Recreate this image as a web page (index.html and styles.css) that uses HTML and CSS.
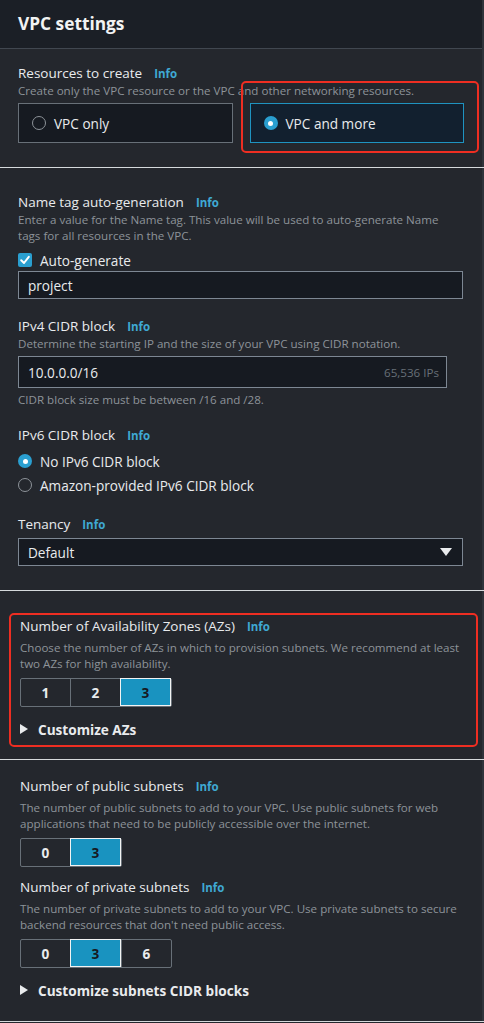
FILE: index.html
```html
<!DOCTYPE html>
<html lang="en">
<head>
<meta charset="utf-8">
<title>VPC settings</title>
<link rel="stylesheet" href="styles.css">
</head>
<body>
<div class="panel">
  <div class="panel-head"><h2 class="title">VPC settings</h2></div>

  <section class="sec sec-res">
    <div class="label-row"><span class="label">Resources to create</span><span class="info">Info</span></div>
    <p class="desc">Create only the VPC resource or the VPC and other networking resources.</p>
    <div class="tiles">
      <div class="tile"><span class="radio"></span><span>VPC only</span></div>
      <div class="tile tile-on"><span class="radio radio-on"></span><span>VPC and more</span></div>
    </div>
    <div class="highlight hl-res"></div>
  </section>

  <section class="sec sec-main">
    <div class="field">
      <div class="label-row"><span class="label">Name tag auto-generation</span><span class="info">Info</span></div>
      <p class="desc">Enter a value for the Name tag. This value will be used to auto-generate Name tags for all resources in the VPC.</p>
      <div class="check-row">
        <span class="checkbox"><svg viewBox="0 0 14 14" width="14" height="14"><path d="M3.2 7.2 L6 10 L10.8 3.8" fill="none" stroke="#fff" stroke-width="2" stroke-linecap="round" stroke-linejoin="round"/></svg></span>
        <span>Auto-generate</span>
      </div>
      <div class="input input-name">project</div>
    </div>

    <div class="field">
      <div class="label-row"><span class="label">IPv4 CIDR block</span><span class="info">Info</span></div>
      <p class="desc">Determine the starting IP and the size of your VPC using CIDR notation.</p>
      <div class="input input-cidr"><span>10.0.0.0/16</span><span class="suffix">65,536 IPs</span></div>
      <p class="desc helper">CIDR block size must be between /16 and /28.</p>
    </div>

    <div class="field">
      <div class="label-row"><span class="label">IPv6 CIDR block</span><span class="info">Info</span></div>
      <div class="radio-list">
        <div class="radio-row"><span class="radio radio-on"></span><span>No IPv6 CIDR block</span></div>
        <div class="radio-row"><span class="radio"></span><span>Amazon-provided IPv6 CIDR block</span></div>
      </div>
    </div>

    <div class="field">
      <div class="label-row"><span class="label">Tenancy</span><span class="info">Info</span></div>
      <div class="input select"><span>Default</span><span class="caret"></span></div>
    </div>
  </section>

  <section class="sec sec-az">
    <div class="label-row"><span class="label">Number of Availability Zones (AZs)</span><span class="info">Info</span></div>
    <p class="desc">Choose the number of AZs in which to provision subnets. We recommend at least two AZs for high availability.</p>
    <div class="seg">
      <span class="seg-btn">1</span><span class="seg-btn">2</span><span class="seg-btn seg-on">3</span>
    </div>
    <div class="expander"><span class="tri"></span><span>Customize AZs</span></div>
    <div class="highlight hl-az"></div>
  </section>

  <section class="sec sec-subnets">
    <div class="label-row"><span class="label">Number of public subnets</span><span class="info">Info</span></div>
    <p class="desc">The number of public subnets to add to your VPC. Use public subnets for web applications that need to be publicly accessible over the internet.</p>
    <div class="seg">
      <span class="seg-btn">0</span><span class="seg-btn seg-on">3</span>
    </div>

    <div class="label-row label-gap"><span class="label">Number of private subnets</span><span class="info">Info</span></div>
    <p class="desc">The number of private subnets to add to your VPC. Use private subnets to secure backend resources that don't need public access.</p>
    <div class="seg">
      <span class="seg-btn">0</span><span class="seg-btn seg-on">3</span><span class="seg-btn">6</span>
    </div>
    <div class="expander"><span class="tri"></span><span>Customize subnets CIDR blocks</span></div>
  </section>
</div>
</body>
</html>
```

FILE: styles.css
```css
* { box-sizing: border-box; }

html, body {
  margin: 0;
  padding: 0;
  background: #24272d;
}

body {
  font-family: "Open Sans", "Noto Sans", sans-serif;
  color: #e9ebed;
  width: 484px;
  height: 1023px;
  overflow: hidden;
}

.panel {
  width: 484px;
  background: #24272d;
  border-right: 2px solid #2f333a;
}

.panel-head {
  height: 49px;
  background: #1b1f26;
  border-bottom: 1px solid #414750;
  display: flex;
  align-items: center;
  padding-left: 18px;
}

.title {
  margin: 0;
  font-size: 17.3px;
  font-weight: 700;
  color: #f2f3f3;
  padding-bottom: 1px;
}

.sec {
  position: relative;
  border-bottom: 1px solid #d5d9dc;
  margin-right: -2px;
}

.label-row {
  display: flex;
  align-items: center;
  height: 20px;
  gap: 12px;
}

.label {
  font-size: 13.5px;
  color: #e9ebed;
}

.info {
  font-size: 11.5px;
  font-weight: 700;
  color: #3fa9d3;
}

.desc {
  margin: 0;
  font-size: 11.6px;
  line-height: 16px;
  color: #8d9399;
}

/* Resources section */
.sec-res {
  padding: 14px 20px 24px 18px;
}

.tiles {
  display: flex;
  gap: 17px;
  margin-top: 4px;
  width: 446px;
}

.tile {
  flex: 1;
  height: 40px;
  display: flex;
  align-items: center;
  gap: 8px;
  padding-left: 13px;
  background: #161a21;
  border: 1px solid #687078;
  font-size: 13.6px;
  color: #e9ebed;
}

.tile-on {
  background: #12202f;
  border-color: #1f93c0;
}

.radio {
  width: 14px;
  height: 14px;
  border-radius: 50%;
  border: 1.5px solid #8d9399;
  flex: none;
}

.radio-on {
  border: none;
  background: #2a9fd0;
  position: relative;
}

.radio-on::after {
  content: "";
  position: absolute;
  left: 4.5px;
  top: 4.5px;
  width: 5px;
  height: 5px;
  border-radius: 50%;
  background: #fff;
}

.highlight {
  position: absolute;
  border: 2px solid #ee2e22;
  border-radius: 5px;
  pointer-events: none;
}

.hl-res {
  left: 241px;
  top: 32px;
  width: 238px;
  height: 72px;
}

/* Main section */
.sec-main {
  padding: 24px 21px 24px 18px;
  display: flex;
  flex-direction: column;
  gap: 17px;
}

.check-row {
  display: flex;
  align-items: center;
  gap: 8px;
  height: 22px;
  margin-top: 5px;
  font-size: 13.6px;
}

.checkbox {
  width: 14px;
  height: 14px;
  border-radius: 2px;
  background: #2a9fd0;
  display: flex;
  flex: none;
}

.input {
  display: flex;
  align-items: center;
  background: #161a21;
  border: 1px solid #7d8793;
  font-size: 13.6px;
  color: #e9ebed;
  padding: 0 9px;
}

.input-name {
  height: 28px;
}

.input-cidr {
  height: 32px;
  width: 429px;
  margin-top: 4px;
  justify-content: space-between;
}

.suffix {
  font-size: 11.6px;
  color: #687078;
  margin-right: -2px;
}

.helper {
  margin-top: 4px;
}

.radio-list {
  margin-top: 4px;
}

.radio-row {
  display: flex;
  align-items: center;
  gap: 8px;
  height: 24px;
  font-size: 13.6px;
}

.select {
  height: 28px;
  margin-top: 4px;
  justify-content: space-between;
  padding-right: 10px;
}

.caret {
  width: 0;
  height: 0;
  border-left: 6px solid transparent;
  border-right: 6px solid transparent;
  border-top: 8px solid #e9ebed;
}

/* AZ section */
.sec-az {
  padding: 25px 20px 20px 20px;
}

.sec-az .desc,
.sec-subnets .desc {
  margin-top: 4px;
}

.seg {
  display: flex;
  margin-top: 6px;
  width: max-content;
  border: 1px solid #687078;
  border-radius: 2px;
}

.seg-btn {
  width: 50px;
  height: 27px;
  display: flex;
  align-items: center;
  justify-content: center;
  font-size: 13.6px;
  font-weight: 700;
  color: #e9ebed;
  border-left: 1px solid #687078;
}

.seg-btn:first-child {
  border-left: none;
  width: 49px;
}

.seg-on {
  background: #1993c0;
  color: #16191f;
  box-shadow: inset 0 0 0 1px #f2f3f3;
  margin: -1px 0;
  height: 28px;
  border-left: none;
  width: 51px;
}

.expander {
  display: flex;
  align-items: center;
  gap: 10px;
  height: 20px;
  margin-top: 12px;
  font-size: 13.6px;
  font-weight: 700;
  color: #e9ebed;
}

.tri {
  width: 0;
  height: 0;
  border-top: 5px solid transparent;
  border-bottom: 5px solid transparent;
  border-left: 8px solid #e9ebed;
}

.hl-az {
  left: 9px;
  top: 22px;
  width: 469px;
  height: 134px;
}

/* Subnets section */
.sec-subnets {
  padding: 16px 20px 21px 20px;
}

.label-gap {
  margin-top: 10px;
}
```
